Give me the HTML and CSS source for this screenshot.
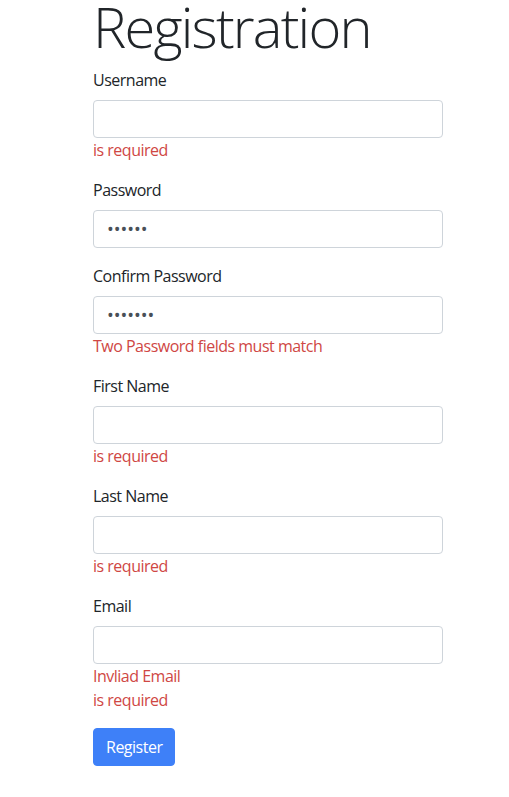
FILE: index.html
```html
<!DOCTYPE html>
<html lang="en">
<head>
<meta charset="utf-8">
<title>Registration</title>
<link rel="stylesheet" href="styles.css">
</head>
<body>
<main class="page">
  <h1 class="title">Registration</h1>
  <form class="form">
    <div class="group">
      <label class="label">Username</label>
      <input class="control" type="text">
      <div class="error">is required</div>
    </div>
    <div class="group">
      <label class="label">Password</label>
      <div class="control pw"><span class="dots">••••••</span></div>
    </div>
    <div class="group">
      <label class="label">Confirm Password</label>
      <div class="control pw"><span class="dots">•••••••</span></div>
      <div class="error">Two Password fields must match</div>
    </div>
    <div class="group">
      <label class="label">First Name</label>
      <input class="control" type="text">
      <div class="error">is required</div>
    </div>
    <div class="group">
      <label class="label">Last Name</label>
      <input class="control" type="text">
      <div class="error">is required</div>
    </div>
    <div class="group">
      <label class="label">Email</label>
      <input class="control" type="text">
      <div class="error">Invliad Email</div>
      <div class="error">is required</div>
    </div>
    <button class="btn" type="button">Register</button>
  </form>
</main>
</body>
</html>
```
FILE: styles.css
```css
* { box-sizing: border-box; }
html, body { margin: 0; padding: 0; background: #fff; }
body {
  font-family: "Open Sans", "Noto Sans", sans-serif;
  font-size: 16px;
  line-height: 24px;
  letter-spacing: -0.5px;
  color: #212529;
}
.page {
  width: 350px;
  margin-left: 93px;
}
.title {
  margin: 0 0 16px 0;
  font-size: 56px;
  font-weight: 300;
  line-height: 52px;
  letter-spacing: -1.8px;
  color: #212529;
}
.form { display: flex; flex-direction: column; }
.group { display: flex; flex-direction: column; margin-bottom: 16px; }
.label { display: block; margin-bottom: 8px; }
.control {
  display: block;
  width: 350px;
  height: 38px;
  padding: 6px 13px;
  border: 1px solid #ced4da;
  border-radius: 4px;
  background: #fff;
  font: inherit;
  color: #495057;
  outline: none;
}
.pw { display: flex; align-items: center; }
.dots {
  font-size: 18px;
  letter-spacing: 0;
  color: #495057;
  line-height: 1;
}
.error { color: #cf4744; }
.btn {
  align-self: flex-start;
  height: 38px;
  padding: 6px 12px;
  border: 1px solid #3e80f8;
  border-radius: 4px;
  background: #3e80f8;
  color: #fff;
  font: inherit;
  letter-spacing: -0.5px;
  line-height: 24px;
}
```
